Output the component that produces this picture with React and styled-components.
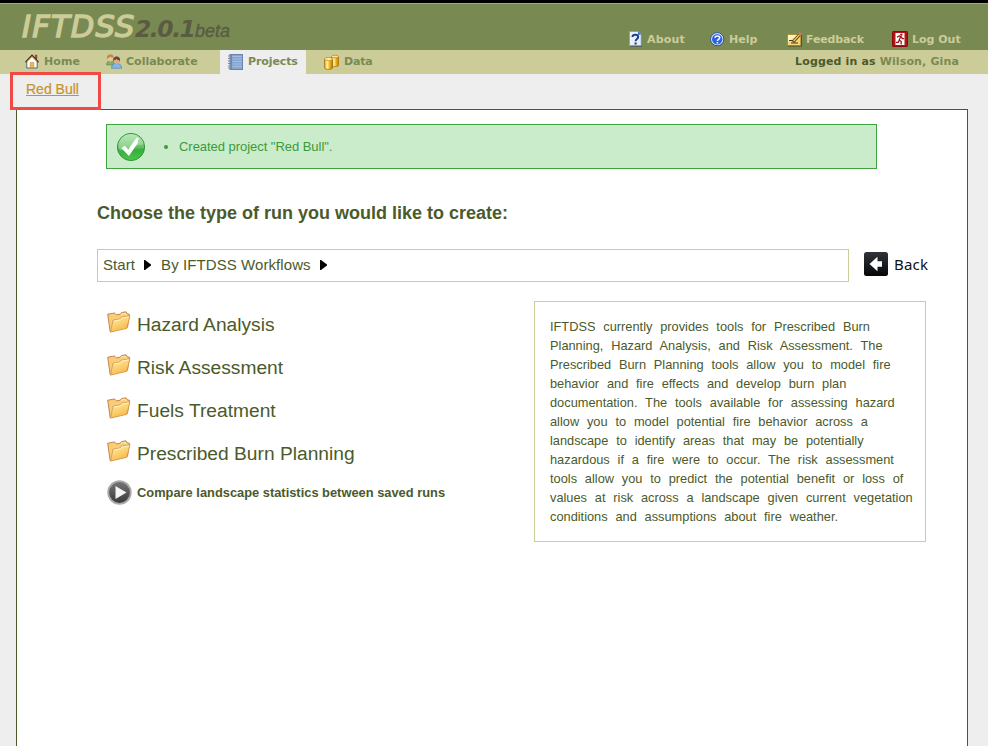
import React from "react";
import styled, { createGlobalStyle } from "styled-components";

const GlobalStyle = createGlobalStyle`
  * { box-sizing: border-box; }
  html, body { margin: 0; height: 100%; background: #eeeeee; overflow: hidden; }
  #root { height: 100%; }
  a { color: inherit; text-decoration: none; }
  svg { display: block; flex: none; }
`;

const arial = `"Liberation Sans", Arial, sans-serif`;
const verdana = `"DejaVu Sans", Verdana, sans-serif`;

const Page = styled.div`
  width: 988px;
  height: 746px;
  display: flex;
  flex-direction: column;
  font-family: ${arial};
  color: #4b5a2a;
`;

const Header = styled.header`
  height: 50px;
  flex: none;
  display: flex;
  justify-content: space-between;
  background: #788a52;
  border-top: 3px solid #000;
  box-shadow: inset 0 1px 0 #a3a599;
`;

const Logo = styled.div`
  display: flex;
  align-items: baseline;
  padding-left: 22px;
  height: 47px;
  line-height: 47px;
  white-space: nowrap;
`;

const LogoName = styled.span`
  width: 113px;
  font: italic 30.5px/47px ${verdana};
  letter-spacing: 1.2px;
  color: #cccc99;
  -webkit-text-stroke: 1.4px #cccc99;
`;

const LogoVersion = styled.span`
  width: 60px;
  font: italic bold 23.5px/47px ${verdana};
  letter-spacing: -1.5px;
  color: #5b5b42;
`;

const LogoStage = styled.span`
  font: italic 18px/47px ${arial};
  color: #5b5b42;
  -webkit-text-stroke: 0.4px #5b5b42;
`;

const Utilities = styled.nav`
  display: flex;
  align-items: flex-start;
  padding-top: 27px;
`;

const UtilityLink = styled.a`
  display: flex;
  align-items: center;
  gap: ${(p) => p.$gap}px;
  width: ${(p) => p.$width}px;
  height: 18px;
  padding-top: 1px;
  font: bold 11px/18px ${verdana};
  letter-spacing: ${(p) => p.$tracking || 0}px;
  color: #cccc99;
  white-space: nowrap;
  svg { margin-top: -1px; }
`;

const TabBar = styled.nav`
  height: 24px;
  flex: none;
  display: flex;
  background: #cccc99;
  font: bold 11px/23px ${verdana};
  color: #788a52;
`;

const Tab = styled.a`
  display: flex;
  align-items: center;
  gap: ${(p) => p.$gap || 5}px;
  width: ${(p) => p.$width}px;
  padding-left: ${(p) => p.$inset}px;
  padding-bottom: 1px;
  background: ${(p) => (p.$active ? "#eeeeee" : "transparent")};
  letter-spacing: ${(p) => p.$tracking || 0}px;
  white-space: nowrap;
`;

const LoginStatus = styled.div`
  margin-left: auto;
  padding-right: 29px;
  letter-spacing: 0.14px;
  color: #4b5a2a;
  white-space: nowrap;
  span { color: #788a52; }
`;

const ProjectBar = styled.div`
  position: relative;
  height: 35px;
  flex: none;
  padding-left: 26px;
  font-size: 14px;
  line-height: 31px;
  color: #c8922e;
  -webkit-text-stroke: 0.2px #c8922e;
  a { text-decoration: underline; }
`;

const Highlight = styled.div`
  position: absolute;
  left: 10px;
  top: -2px;
  width: 91px;
  height: 38px;
  border: 3px solid #ef4a46;
`;

const Panel = styled.main`
  flex: 1;
  margin: 0 20px 0 16px;
  padding: 14px 0 0 80px;
  background: #fff;
  border: 1px solid #4b5a2a;
  border-bottom: 0;
`;

const Message = styled.div`
  width: 771px;
  height: 45px;
  margin-left: 9px;
  padding-left: 9px;
  display: flex;
  align-items: center;
  background: #cbecca;
  border: 1px solid #3ea23e;
  color: #3c9a3c;
  font-size: 13px;
  letter-spacing: -0.04px;
`;

const Bullet = styled.span`
  width: 4px;
  height: 4px;
  margin: 1px 11px 0 18px;
  border-radius: 50%;
  background: #3c9a3c;
`;

const Title = styled.h1`
  margin: 33px 0 0;
  height: 22px;
  font-size: 18px;
  line-height: 22px;
`;

const CrumbRow = styled.div`
  display: flex;
  align-items: center;
  margin-top: 25px;
  height: 33px;
`;

const Crumbs = styled.div`
  width: 752px;
  height: 33px;
  display: flex;
  align-items: center;
  padding: 0 0 2px 5px;
  border: 1px solid #cccc99;
  font-size: 15px;
  letter-spacing: 0.08px;
  svg { margin: 1px 10px 0 9px; }
`;

const BackLink = styled.a`
  display: flex;
  align-items: center;
  gap: 6px;
  margin: -4px 0 0 15px;
  font: 15px/20px "Noto Sans", Tahoma, sans-serif;
  letter-spacing: 0.2px;
  color: #111;
`;

const Columns = styled.div`
  display: flex;
  margin-top: 19px;
`;

const Workflows = styled.div`
  width: 437px;
  padding: 2px 0 0 10px;
`;

const Workflow = styled.a`
  display: flex;
  height: 43px;
  gap: 6px;
  font-size: 19.2px;
  line-height: 44px;
  svg { margin-top: 8px; }
`;

const CompareLink = styled.a`
  display: flex;
  align-items: center;
  gap: 5px;
  height: 34px;
  font-size: 12.86px;
  font-weight: bold;
`;

const Description = styled.p`
  width: 392px;
  height: 241px;
  margin: 0;
  padding: 15px 10px 0 15px;
  border: 1px solid #cccc99;
  font-size: 12.8px;
  line-height: 19px;
  word-spacing: 4.25px;
`;

const HomeIcon = () => (
  <svg width="14" height="15" viewBox="0 0 14 15">
    <path d="M10.300 1h1.600v4h-1.600z" fill="#b43c30" stroke="#803020" strokeWidth=".5" />
    <path d="M1.800 7.500 7 2.300l5.200 5.200V14H1.800z" fill="#fff" stroke="#53617f" />
    <path d="M.5 8.200 7 1.300l6.500 6.900" fill="none" stroke="#3b2b18" strokeWidth="1.400" />
    <path d="M1.800 7.800 7 2.500l5.200 5.300" fill="none" stroke="#e0b24a" strokeWidth=".9" />
    <path d="M5.200 8.500h3.600v5H5.200z" fill="#efb84a" stroke="#c58b2c" strokeWidth=".6" />
  </svg>
);

const PeopleIcon = () => (
  <svg width="16" height="15" viewBox="0 0 16 15">
    <path d="M.6 11c0-3 1.500-4.500 3.800-4.500S8.500 8 8.500 11z" fill="#7fb36a" stroke="#55844a" strokeWidth=".6" />
    <ellipse cx="4.300" cy="4.300" rx="2.700" ry="3.200" fill="#efc394" />
    <path d="M1 5.500C.5 1.500 2.300.5 4.400.5s3.800 1.200 3.200 5L6.800 3.600C5.500 3.500 4.800 3 4.200 2.500 3.500 3.500 2.500 4 1.700 4z" fill="#b58a48" />
    <path d="M5.500 14.300c0-3.600 2-4.900 5.100-4.900s5 1.500 5 4.900z" fill="#83b5e6" stroke="#4b7eb0" strokeWidth=".6" />
    <ellipse cx="10.600" cy="6.600" rx="2.800" ry="3.500" fill="#dfab80" />
    <path d="M7.300 7.500C6.700 4 8.500 2.500 10.700 2.500s4 1.500 3.200 5.500l-.9-2C11.500 5.800 11 5.400 10.300 4.900 9.500 5.800 8.800 6 8.100 6z" fill="#6a4638" />
  </svg>
);

const NotebookIcon = () => (
  <svg width="15" height="16" viewBox="0 0 15 16">
    <rect x="2" y=".5" width="12.500" height="15" fill="#86a6d2" stroke="#6a83ab" />
    <path d="M4.500 2.500H14M4.500 5H14M4.500 7.500H14M4.500 10H14M4.500 12.500H14" stroke="#a5bde0" />
    <path d="M3.500 1v14" stroke="#6c89b5" />
    <path d="M0 2h3M0 4.500h3M0 7h3M0 9.500h3M0 12h3M0 14h3" stroke="#7c879b" />
  </svg>
);

const DataIcon = () => (
  <svg width="15" height="16" viewBox="0 0 15 16">
    <defs>
      <linearGradient id="gold">
        <stop offset="0" stopColor="#e5a416" />
        <stop offset=".35" stopColor="#fff3a8" />
        <stop offset=".65" stopColor="#efb21b" />
        <stop offset="1" stopColor="#b97700" />
      </linearGradient>
    </defs>
    <path d="M7.500 2.500v9c0 1.500 7 1.500 7 0v-9z" fill="url(#gold)" stroke="#a8700c" strokeWidth=".7" />
    <ellipse cx="11" cy="2.500" rx="3.500" ry="1.300" fill="#fbe795" stroke="#b88013" strokeWidth=".7" />
    <path d="M.5 5v9c0 1.800 8 1.800 8 0V5z" fill="url(#gold)" stroke="#9a6810" strokeWidth=".7" />
    <ellipse cx="4.500" cy="5" rx="4" ry="1.500" fill="#fff0a8" stroke="#b88013" strokeWidth=".7" />
  </svg>
);

const AboutIcon = () => (
  <svg width="14" height="16" viewBox="0 0 14 16">
    <path d="M1.500 1H10l3 3v11.500H1.500z" fill="#314663" />
    <path d="M.5.5h8.700l3 3v11H.5z" fill="#e7f1fc" stroke="#7fa4d6" />
    <path d="M9 .5v3.200h3.200z" fill="#3372ca" />
    <path d="M3.500 6c.1-3 5.700-3 5.700 0 0 2-2.600 2-2.600 4.200" fill="none" stroke="#203f91" strokeWidth="2" />
    <path d="M5.500 11.500h2.200v2H5.500z" fill="#203f91" />
  </svg>
);

const HelpIcon = () => (
  <svg width="15" height="15" viewBox="0 0 15 15">
    <circle cx="7.200" cy="7.200" r="6.600" fill="#e4edff" stroke="#2e4b93" />
    <circle cx="7.200" cy="7.200" r="5.200" fill="#2b62df" />
    <path d="M5 5.800c.1-2.600 4.700-2.500 4.700 0C9.700 7.500 7.400 7.300 7.400 9" fill="none" stroke="#fff" strokeWidth="1.500" />
    <path d="M6.600 10h1.600v1.500H6.600z" fill="#fff" />
  </svg>
);

const FeedbackIcon = () => (
  <svg width="16" height="15" viewBox="0 0 16 15">
    <path d="M1 3h14v11.500H1z" fill="#56451c" />
    <path d="M.5 2.500h13.300v11H.5z" fill="#f1d77b" stroke="#a17b20" strokeWidth=".6" />
    <path d="M1 3h9L1 10z" fill="#fff3bb" />
    <path d="M2 8.500h4.500M4 11h7" stroke="#47391c" strokeWidth="1.200" />
    <path d="m6 10 6.800-7.500" stroke="#4d3a1c" strokeWidth="3" />
    <path d="m6.500 9.300 6-6.600" stroke="#f2c749" strokeWidth="1.500" />
    <path d="m12.200 2.900 1.700-1.800" stroke="#dd706a" strokeWidth="3" />
  </svg>
);

const LogoutIcon = () => (
  <svg width="16" height="16" viewBox="0 0 16 16">
    <rect x=".5" y=".5" width="15" height="15" rx=".7" fill="#b51218" stroke="#850b10" />
    <path d="M3.500 2h9v12h-9z" fill="#fff" />
    <circle cx="9.300" cy="3.600" r="1.200" fill="#a01419" />
    <path d="M5 6.200 7.300 5l2 .8 1 1.800h1.700M8.500 6 7.200 9l2 1.500v3M7.200 9.300l-1 2H4" fill="none" stroke="#a01419" strokeWidth="1.300" />
  </svg>
);

const CheckIcon = () => (
  <svg width="30" height="30" viewBox="0 0 30 30">
    <defs>
      <linearGradient id="green" x2="0" y2="1">
        <stop offset="0" stopColor="#a5dfa2" />
        <stop offset=".5" stopColor="#62c264" />
        <stop offset=".6" stopColor="#38ad3d" />
        <stop offset="1" stopColor="#4bc64b" />
      </linearGradient>
    </defs>
    <circle cx="15" cy="15" r="13.600" fill="url(#green)" stroke="#2e9634" />
    <path d="M2.200 14C3 6 8.500 2 15 2s12 4.500 12.800 10.500C20 12 12 18 4 18.500c-1-1-1.500-3-1.800-4.500z" fill="#fff" opacity=".28" />
    <path d="m5.300 16 3.500-2.200 3.400 3.600 8.300-11.600 2 .3-.7 4.900-8.900 13z" fill="#fff" />
  </svg>
);

const ArrowIcon = () => (
  <svg width="7" height="10" viewBox="0 0 7 10"><path d="M0 0h1l6 4.500v1L1 10H0z" fill="#000" /></svg>
);

const BackIcon = () => (
  <svg width="24" height="24" viewBox="0 0 24 24">
    <defs>
      <linearGradient id="black" x2="0" y2="1">
        <stop offset="0" stopColor="#30343a" />
        <stop offset="1" stopColor="#060608" />
      </linearGradient>
    </defs>
    <rect width="24" height="24" rx="2.500" fill="url(#black)" />
    <path d="m5.500 12 8-7.300v4.500H18v5.600h-4.500v4.500z" fill="#fff" />
  </svg>
);

const FolderIcon = () => (
  <svg width="24" height="22" viewBox="0 0 24 22">
    <defs>
      <linearGradient id="folder" x1="0" y1="0" x2=".5" y2="1">
        <stop offset="0" stopColor="#fff2ad" />
        <stop offset="1" stopColor="#f9b846" />
      </linearGradient>
    </defs>
    <path d="M.7 3.200 7.500 2l2 1.800 3.700-.6L14.500 1.600 19 .8l1.200 2 2.300.5-2 13L3.200 20.800z" fill="#f9cc78" stroke="#bd7a40" strokeWidth=".9" />
    <path d="m14 3.200 4.300-.9.900 2" fill="none" stroke="#fff0b0" />
    <path d="M6 9.200 12.800 8l1.600-1.800 8.600-1.500-3.300 12.700-16.200 3.700z" fill="url(#folder)" stroke="#cf8d48" strokeWidth=".7" />
    <path d="m7 10 6.400-1.200L15 7l6.700-1.100" fill="none" stroke="#fff9d5" strokeWidth=".8" />
  </svg>
);

const PlayIcon = () => (
  <svg width="25" height="25" viewBox="0 0 25 25">
    <defs>
      <linearGradient id="gray" x2="0" y2="1">
        <stop offset="0" stopColor="#777" />
        <stop offset="1" stopColor="#393939" />
      </linearGradient>
    </defs>
    <circle cx="12.500" cy="12.500" r="11.300" fill="url(#gray)" stroke="#aaa" strokeWidth="1.800" />
    <path d="M8.500 6v13l11-6.500z" fill="#f5f5f5" />
  </svg>
);

const workflows = ["Hazard Analysis", "Risk Assessment", "Fuels Treatment", "Prescribed Burn Planning"];

export default function App() {
  return (
    <Page>
      <GlobalStyle />
      <Header>
        <Logo>
          <LogoName>IFTDSS</LogoName>
          <LogoVersion>2.0.1</LogoVersion>
          <LogoStage>beta</LogoStage>
        </Logo>
        <Utilities>
          <UtilityLink href="#" $width={81} $gap={4} $tracking={0.15}><AboutIcon />About</UtilityLink>
          <UtilityLink href="#" $width={77} $gap={4}><HelpIcon />Help</UtilityLink>
          <UtilityLink href="#" $width={105} $gap={3} $tracking={-0.15}><FeedbackIcon />Feedback</UtilityLink>
          <UtilityLink href="#" $width={96} $gap={4}><LogoutIcon />Log Out</UtilityLink>
        </Utilities>
      </Header>
      <TabBar>
        <Tab href="#" $width={106} $inset={25} $tracking={0.1}><HomeIcon />Home</Tab>
        <Tab href="#" $width={114} $inset={0} $gap={4}><PeopleIcon />Collaborate</Tab>
        <Tab href="#" $width={86} $inset={8} $tracking={-0.1} $active><NotebookIcon />Projects</Tab>
        <Tab href="#" $width={90} $inset={18} $tracking={-0.2}><DataIcon />Data</Tab>
        <LoginStatus>Logged in as <span>Wilson, Gina</span></LoginStatus>
      </TabBar>
      <ProjectBar>
        <a href="#">Red Bull</a>
        <Highlight />
      </ProjectBar>
      <Panel>
        <Message><CheckIcon /><Bullet />Created project "Red Bull".</Message>
        <Title>Choose the type of run you would like to create:</Title>
        <CrumbRow>
          <Crumbs>Start<ArrowIcon />By IFTDSS Workflows<ArrowIcon /></Crumbs>
          <BackLink href="#"><BackIcon />Back</BackLink>
        </CrumbRow>
        <Columns>
          <Workflows>
            {workflows.map((name) => (
              <Workflow href="#" key={name}><FolderIcon />{name}</Workflow>
            ))}
            <CompareLink href="#"><PlayIcon />Compare landscape statistics between saved runs</CompareLink>
          </Workflows>
          <Description>
            IFTDSS currently provides tools for Prescribed Burn Planning, Hazard Analysis, and Risk
            Assessment. The Prescribed Burn Planning tools allow you to model fire behavior and fire
            effects and develop burn plan documentation. The tools available for assessing hazard allow
            you to model potential fire behavior across a landscape to identify areas that may be
            potentially hazardous if a fire were to occur. The risk assessment tools allow you to predict
            the potential benefit or loss of values at risk across a landscape given current vegetation
            conditions and assumptions about fire weather.
          </Description>
        </Columns>
      </Panel>
    </Page>
  );
}
